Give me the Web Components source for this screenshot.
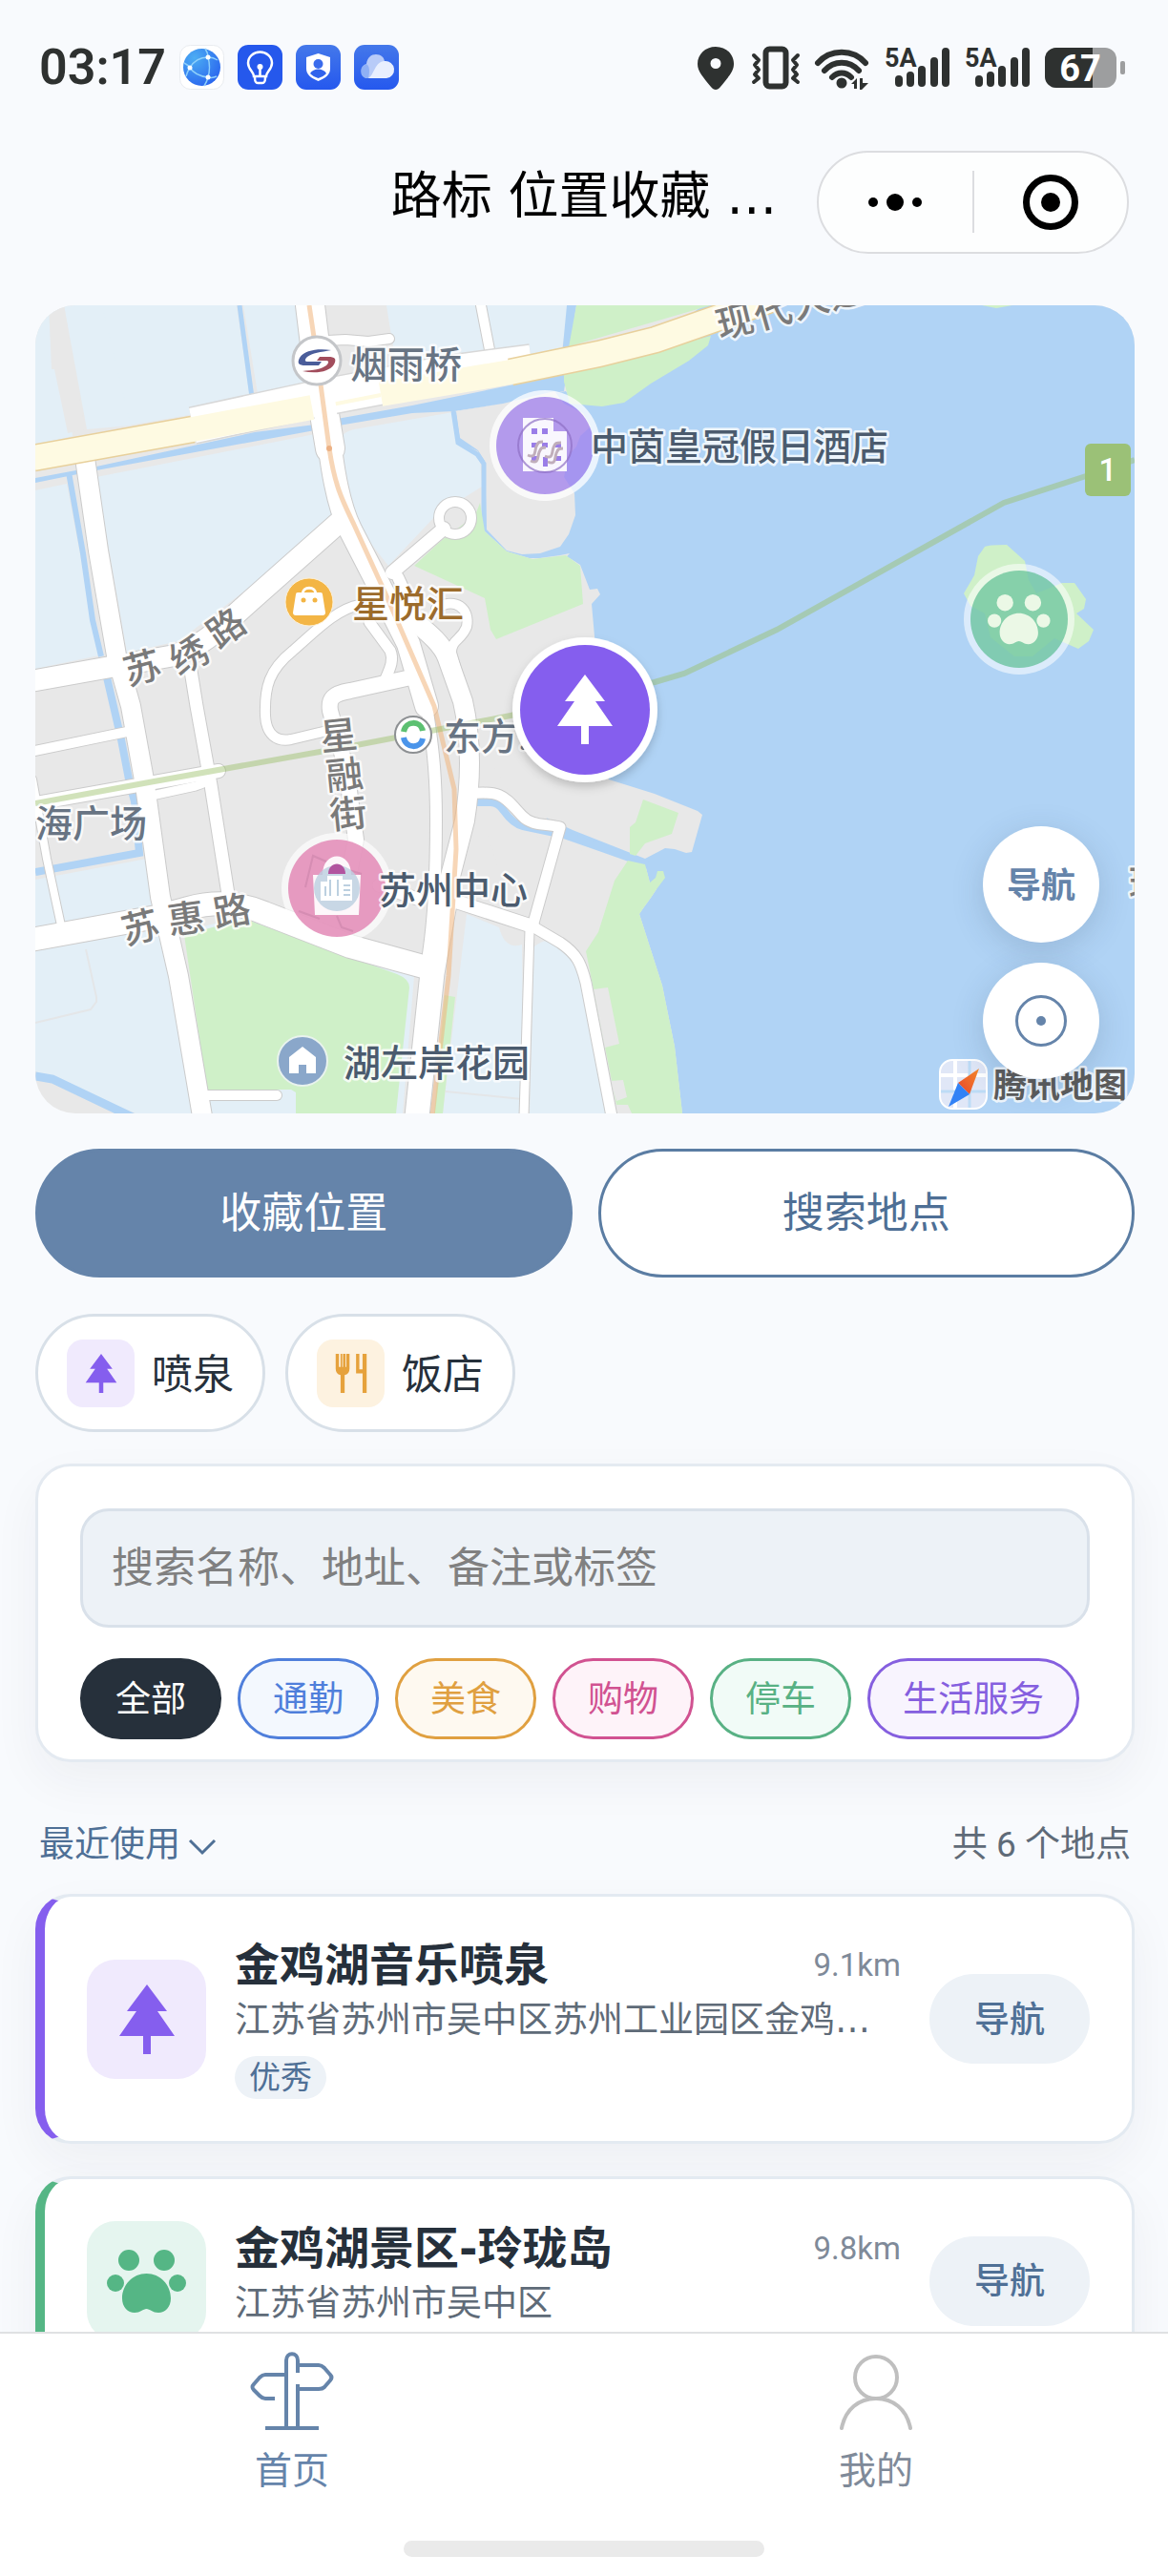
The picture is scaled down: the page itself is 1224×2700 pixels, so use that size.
<!DOCTYPE html>
<html lang="zh-CN">
<head>
<meta charset="utf-8">
<meta name="viewport" content="width=device-width, initial-scale=1">
<title>路标 位置收藏</title>
<style>
  html, body {
    margin: 0;
    height: 100%;
  }
  body {
    background: #f8fafd;
    color: #26303b;
    font-family: Roboto, "Noto Sans CJK SC", sans-serif;
  }
</style>
</head>
<body>
<app-shell>
  <status-bar slot="top" time="03:17"></status-bar>
  <nav-bar slot="top">路标 位置收藏 …</nav-bar>

  <place-map></place-map>
  <action-row>
    <action-button primary>收藏位置</action-button>
    <action-button>搜索地点</action-button>
  </action-row>
  <chip-row>
    <place-chip icon="tree" color="#855eee" tint="#f0eafd">喷泉</place-chip>
    <place-chip icon="fork" color="#e6a23c" tint="#fdf2e0">饭店</place-chip>
  </chip-row>
  <search-panel placeholder="搜索名称、地址、备注或标签">
    <filter-pill color="#ffffff" tint="#26303b" edge="#26303b" active>全部</filter-pill>
    <filter-pill color="#4f7fdb" tint="#f3f8fe">通勤</filter-pill>
    <filter-pill color="#e0a040" tint="#fef9f0">美食</filter-pill>
    <filter-pill color="#d15291" tint="#fef3f9">购物</filter-pill>
    <filter-pill color="#58b184" tint="#f1fbf7">停车</filter-pill>
    <filter-pill color="#855fdf" tint="#f8f4fe">生活服务</filter-pill>
  </search-panel>
  <list-header sort="最近使用">共 6 个地点</list-header>
  <place-card icon="tree" color="#855eee" tint="#f0eafd" distance="9.1km">
    <span slot="name">金鸡湖音乐喷泉</span>
    <span slot="address">江苏省苏州市吴中区苏州工业园区金鸡…</span>
    <place-tag slot="tags">优秀</place-tag>
  </place-card>
  <place-card icon="paw" color="#55b685" tint="#e5f5ef" distance="9.8km">
    <span slot="name">金鸡湖景区-玲珑岛</span>
    <span slot="address">江苏省苏州市吴中区</span>
  </place-card>

  <tab-bar slot="bottom">
    <tab-item icon="sign" active>首页</tab-item>
    <tab-item icon="user">我的</tab-item>
  </tab-bar>
</app-shell>

<script>
const TREE = "M29 0 50 28H40L58 54H33V73H25V54H0L18 28H8Z";
const PAW = `<circle cx="23" cy="11" r="11"/><circle cx="60" cy="11" r="11"/>
  <circle cx="9" cy="35" r="9"/><circle cx="74" cy="35" r="9"/>
  <path d="M41.5 25C56 25 67 37 67 51c0 9-6 15-13 15-6 0-9-4-12.5-4S35 66 29 66c-7 0-13-6-13-15 0-14 11-26 25.5-26z"/>`;

const ICONS = {
	tree: { w: 58, h: 73, body: `<path fill="currentColor" d="${TREE}"/>` },
	paw: { w: 83, h: 66, body: `<g fill="currentColor">${PAW}</g>` },
	fork: {
		w: 38,
		h: 48,
		body: `<path fill="currentColor" d="M0 0h4v16h2V0h2v16h1V0h3v16h1V0h4v18c0 4-2 7-6 8v22H6V26c-4-1-6-4-6-8zM25 0h4v19h4V0h5v48h-5V24h-8z"/>`,
	},
	sign: {
		w: 88,
		h: 82,
		body: `<g fill="none" stroke="currentColor" stroke-width="4">
      <path d="M38 78V9c0-9 12-9 12 0v13M50 34v44M16 80h56"/>
      <path d="M50 14h22c3 0 4 1 6 3l6 7c2 2 2 4 0 6l-6 7c-2 2-3 2-6 2H50"/>
      <path d="M38 24H16c-3 0-4 1-6 3l-6 7c-2 2-2 4 0 6l6 6c2 2 3 3 6 3h10"/></g>`,
	},
	user: {
		w: 88,
		h: 82,
		body: `<g fill="none" stroke="#bfbfbf" stroke-width="4" stroke-linecap="round">
      <circle cx="44" cy="27" r="22"/><path d="M8 80C12 60 26 49 44 49s32 11 36 31"/></g>`,
	},
};

function icon(name, width) {
	const { w, h, body } = ICONS[name];
	return `<svg width="${width || w}" viewBox="0 0 ${w} ${h}" aria-hidden="true">${body}</svg>`;
}

class BaseElement extends HTMLElement {
	constructor() {
		super();
		this.attachShadow({ mode: "open" });
	}
	connectedCallback() {
		this.shadowRoot.innerHTML = this.render();
	}
}

class AppShell extends BaseElement {
	render() {
		return `
    <style>
    :host {
      display: flex;
      flex-direction: column;
      height: 100vh;
    }
    main {
      flex: 1;
      min-height: 0;
      overflow: hidden;
      padding: 38px 35px 0 37px;
      display: flex;
      flex-direction: column;
    }
    ::slotted(*) {
      flex-shrink: 0;
    }
    </style>
    <slot name="top"></slot>
    <main><slot></slot></main>
    <slot name="bottom"></slot>
    `;
	}
}
customElements.define("app-shell", AppShell);

class StatusBar extends BaseElement {
	signal() {
		return `
    <svg width="68" height="44" viewBox="0 0 68 44">
      <text x="0" y="21" font-size="27" font-weight="700">5A</text>
      <g stroke="currentColor" stroke-width="8" stroke-linecap="round">
        <path d="M15 34v4M27 30v8M39 24v14M52 15v23M64 5v33"/>
      </g>
    </svg>`;
	}
	render() {
		return `
    <style>
    :host {
      display: flex;
      align-items: center;
      justify-content: space-between;
      height: 141px;
      padding: 0 45px 0 41px;
      color: #2e3130;
    }
    div {
      display: flex;
      align-items: center;
      gap: 14px;
    }
    .system {
      gap: 16px;
    }
    time {
      font-size: 52px;
      font-weight: 600;
      line-height: 56px;
    }
    svg {
      display: block;
      fill: currentColor;
      overflow: visible;
    }
    </style>
    <div>
      <time>${this.getAttribute("time")}</time>
      <svg width="47" height="47" viewBox="0 0 47 47">
        <defs>
          <radialGradient id="globe" cx=".3" cy=".25" r=".9"><stop offset="0" stop-color="#4cadf3"/><stop offset="1" stop-color="#2760ee"/></radialGradient>
          <linearGradient id="app" x2="0" y2="1"><stop offset="0" stop-color="#4478ea"/><stop offset="1" stop-color="#2558ee"/></linearGradient>
        </defs>
        <rect x=".5" y=".5" width="46" height="46" rx="11" fill="#fff" stroke="#e9ecf0"/>
        <circle cx="23.5" cy="23.5" r="19.5" fill="url(#globe)"/>
        <path d="M11 24C15 17 22 13 30 13M11 24c4 6 10 9 19 10M30 13c2 7 2 14 0 21M30 13c0-4-1-6-3-9M30 13c4 0 7 1 10 3M11 24c-2-3-4-4-6-5M11 24c-2 3-3 5-4 9M30 34c4 1 7 0 9-1M30 34c-1 4-2 6-4 9" fill="none" stroke="#8ed0fb" stroke-width="1.5"/>
        <g fill="#fff"><circle cx="11" cy="24" r="2.5"/><circle cx="30" cy="13" r="2.5"/><circle cx="30" cy="34" r="2.5"/></g>
      </svg>
      <svg width="47" height="47" viewBox="0 0 47 47">
        <rect width="47" height="47" rx="11" fill="#2558ec"/>
        <g fill="none" stroke="#fff" stroke-width="2.5"><path d="M17 33c0-5-6-7-6-14a12.5 11.5 0 0 1 25 0c0 7-6 9-6 14zM18 34c0 5 1 6 3 6h5c2 0 3-1 3-6M23.5 24v9"/></g>
        <circle cx="23.5" cy="23" r="3" fill="#fff"/>
      </svg>
      <svg width="47" height="47" viewBox="0 0 47 47">
        <rect width="47" height="47" rx="11" fill="url(#app)"/>
        <path fill="#fff" d="M23.5 9 36 13v12c0 6-5 10-12.5 13C16 35 11 31 11 25V13z"/>
        <circle cx="23.5" cy="20" r="5" fill="#3a6bec"/><path fill="#3163ec" d="M15 30c3-6 14-6 17 0-2 2-5 4-8.5 5-3.5-1-6.500-3-8.500-5z"/>
      </svg>
      <svg width="47" height="47" viewBox="0 0 47 47">
        <rect width="47" height="47" rx="11" fill="url(#app)"/>
        <path fill="#b8cbf8" d="M13 35a8 8 0 0 1 0-15c1-7 5-10 10-10s9 3 9 8l-14 17z"/>
        <path fill="#8fb0f5" d="M13 20c3 2 4 7 2 15h-3a8 8 0 0 1 1-15z"/>
        <path fill="#e9effe" d="M15 35c6-3 7-18 17-18a9 9 0 0 1 2 18z"/>
      </svg>
    </div>
    <div class="system">
      <svg width="41" height="46" viewBox="0 0 41 46"><path fill-rule="evenodd" d="M19 1c11 0 19 8 19 18 0 8-6 14-14 24-3 4-7 4-10 0C6 33 0 27 0 19 0 9 8 1 19 1zm0 12a5.5 5.5 0 1 0 0 11 5.5 5.5 0 0 0 0-11z"/></svg>
      <svg width="50" height="46" viewBox="0 0 50 46" stroke="currentColor">
        <rect x="14.5" y="3.5" width="21" height="39" rx="4" stroke-width="6" fill="none"/>
        <path d="M2 10l5 5-4 5 4 5-4 5 4 4-5 4M48 10l-5 5 4 5-4 5 4 5-4 4 5 4" stroke-width="4" fill="none" stroke-linecap="round" stroke-linejoin="round"/>
      </svg>
      <svg width="57" height="46" viewBox="0 0 57 46">
        <path d="M3 18C16 3 40 3 53 18M10 26c10-11 26-11 36 0M18 33c6-6 14-6 20 0" fill="none" stroke="currentColor" stroke-width="6" stroke-linecap="round"/>
        <circle cx="28" cy="39" r="5.5"/><path d="M38 40l6-6v11h-3v-5zM47 34h3v5h6l-7 7h-2z"/>
      </svg>
      ${this.signal()}
      ${this.signal()}
      <svg width="84" height="42" viewBox="0 0 84 42">
        <defs><clipPath id="cell"><rect width="75" height="42" rx="12"/></clipPath></defs>
        <g clip-path="url(#cell)"><path fill="#9d9e9f" d="M0 0h75v42H0z"/><path d="M0 0h50v42H0z"/></g>
        <rect x="79" y="14" width="5" height="14" rx="2" fill="#9d9e9f"/>
        <text x="37" y="35" font-size="38" font-weight="700" text-anchor="middle" fill="#fff">67</text>
      </svg>
    </div>
    `;
	}
}
customElements.define("status-bar", StatusBar);

class NavBar extends BaseElement {
	render() {
		return `
    <style>
    :host {
      display: grid;
      grid-template-columns: 1fr auto 1fr;
      align-items: center;
      height: 141px;
      padding: 0 41px;
    }
    h1 {
      grid-column: 2;
      margin: 0;
      padding-bottom: 12px;
      font-family: "DejaVu Sans", "Noto Sans CJK SC", sans-serif;
      font-size: 53px;
      font-weight: 400;
      line-height: 64px;
      white-space: nowrap;
      color: #000;
    }
    .capsule {
      justify-self: end;
      box-sizing: border-box;
      display: flex;
      align-items: center;
      width: 327px;
      height: 108px;
      border: 2px solid #dcdde0;
      border-radius: 54px;
      background: #fdfefe;
    }
    button {
      flex: 1;
      display: flex;
      justify-content: center;
      padding: 0;
      border: 0;
      background: none;
    }
    button + button {
      border-left: 2px solid #dcdde0;
      height: 65px;
      align-items: center;
    }
    </style>
    <h1><slot></slot></h1>
    <div class="capsule">
      <button aria-label="更多"><svg width="58" height="20" viewBox="0 0 58 20"><circle cx="6" cy="10" r="5"/><circle cx="29" cy="10" r="9"/><circle cx="52" cy="10" r="5"/></svg></button>
      <button aria-label="关闭"><svg width="58" height="58" viewBox="0 0 58 58"><circle cx="29" cy="29" r="25.5" fill="none" stroke="#000" stroke-width="7"/><circle cx="29" cy="29" r="10"/></svg></button>
    </div>
    `;
	}
}
customElements.define("nav-bar", NavBar);

class PlaceMap extends BaseElement {
	// one stroked path per road: casing first, surface on top
	roads() {
		const list = [
			[30, "M288 0 299 90 309 150"],
			[24, "M299 90 309 150C314 190 320 215 330 235L366 305 391 355 410 420"],
			[12, "M410 420C418 470 420 500 420 540 420 600 418 640 412 680"],
			[20, "M385 320C400 335 425 350 432 370L448 415C456 450 458 490 450 540L432 610"],
			[25, "M432 610 416 700 400 850"],
			[22, "M320 226 223 312C190 342 175 357 146 367L-5 394"],
			[20, "M52 160 66 257 85 367 100 420 115 503 131 620 150 703 175 850"],
			[13, "M163 383 169 420 184 503 202 617"],
			[10, "M-5 468 96 447"],
			[14, "M-5 523 192 488"],
			[9, "M122 514 168 504Q182 500 186 490"],
			[24, "M-5 665 127 641 160 632C190 624 215 626 240 637L330 672 410 694"],
			[8, "M-3 497 12 580 27 650"],
			[10, "M340 314C315 318 290 345 270 362 245 382 240 400 241 430 242 450 253 458 268 455L306 446"],
			[16, "M398 389 330 404C312 407 307 412 309 425L326 487 336 560 330 590"],
			[14, "M374 280 428 234"],
			[12, "M380 285 408 345"],
			[11, "M350 332 372 362C376 372 372 380 366 394"],
			[10, "M306 37 325 36 349 38 371 35"],
			[10, "M467 0 479 62"],
			[13, "M360 608 400 622"],
			[14, "M438 624 521 651"],
			[11, "M455 512C490 508 492 516 510 535 520 546 535 543 550 547L521 651"],
			[9, "M518 655 512 850"],
			[11, "M521 651 550 668C568 680 572 690 577 710L604 850"],
			[10, "M181 828H253"],
		];
		const draw = (extra, color) =>
			list.map(([w, d]) => `<path d="${d}" stroke="${color}" stroke-width="${w + extra}"/>`).join("");
		const ring = (w, color) =>
			`<circle cx="440" cy="223" r="17" stroke="${color}" stroke-width="${w}"/>
       <path d="M420 318C440 305 456 318 452 337 446 352 436 350 436 364L444 392" stroke="${color}" stroke-width="${w}"/>`;
		return `<g fill="none" stroke-linecap="round" stroke-linejoin="round">
      ${draw(2, "#cbcbcb")}${ring(12, "#cbcbcb")}${draw(0, "#fff")}${ring(10, "#fff")}</g>`;
	}
	roadText(chars) {
		return chars
			.map(([ch, x, y, a]) => `<text class="road" text-anchor="middle" transform="translate(${x} ${y}) rotate(${a})" y="14">${ch}</text>`)
			.join("");
	}
	render() {
		return `
    <style>
    :host {
      display: block;
      position: relative;
      aspect-ratio: 1152 / 847;
      border-radius: 42px;
      overflow: hidden;
    }
    .canvas {
      display: block;
      width: 100%;
      height: 100%;
    }
    text {
      font-size: 39px;
      font-weight: 500;
      paint-order: stroke;
      stroke: rgba(255, 255, 255, 0.8);
      stroke-width: 5px;
      stroke-linejoin: round;
      fill: #4b5b6e;
    }
    text.road {
      fill: #7a7a7a;
    }
    text.station {
      fill: #687483;
    }
    .controls {
      position: absolute;
      right: 37px;
      bottom: 36px;
      display: flex;
      flex-direction: column;
      gap: 21px;
    }
    button {
      display: flex;
      align-items: center;
      justify-content: center;
      width: 122px;
      height: 122px;
      padding: 0;
      border: 0;
      border-radius: 50%;
      background: #fff;
      color: #6584aa;
      box-shadow: 0 8px 34px rgba(38, 60, 90, 0.18);
      font: inherit;
      font-size: 36px;
      font-weight: 700;
    }
    button span {
      padding-bottom: 4px;
    }
    </style>
    <svg class="canvas" viewBox="0 0 1152 847" preserveAspectRatio="xMidYMid slice" role="img" aria-label="地图">
      <defs>
        <filter id="lift" x="-20%" y="-20%" width="140%" height="150%"><feDropShadow dx="0" dy="5" stdDeviation="5" flood-opacity=".18"/></filter>
        <linearGradient id="north" x1="1" y1="0" x2="0" y2="1"><stop offset="0" stop-color="#f58a2c"/><stop offset="1" stop-color="#e8452b"/></linearGradient>
      </defs>
      <path fill="#e8e8e8" d="M0 0h1152v847H0z"/>
      <g fill="#e3eff7">
        <path d="M0 0h24l5 57 6 48 4 32-39 10zM60 0h151l15 104-129 22-18-3zM218 0h60l9 90-53 9zM368 0h192l-9 50-11 2-160 12-6-26z"/>
        <path d="M64 180 293 135 318 225 150 352 96 364zM0 194l33-7 34 180-67 14zM322 138q0-5 12-8l104-18 5 34 23 14 2 30-48 30-50 53-30-38-15-55z"/>
        <path d="M0 602 117 580l8 53-125 20zM0 677l133-24 34 194h-62L0 803zM160 655l60-15 177 63-12 144H180zM452 638l34 14q6 24 24 18l2 177h-85zM523 672q10-8 17-5l31 23 30 157h-83z"/>
      </g>
      <path fill="#e3eff7" d="M30 0h40l30 126-46 4z"/>
      <path fill="#e8e8e8" d="M14 0h16l22 130-18 4-14-67h-3z"/>
      <path d="M53 675 64 725v5l-6 8-58 14M430 824l80 8" fill="none" stroke="#e4e6e8" stroke-width="2"/>
      <g fill="#b0d3f5">
        <path d="M700 0h452v847H678l-8-70-13-64-24-75 4-6 8-11 6-9-7-7-5-19-100-38-60-200 81-88-10 2-29 4-27-8-23-21-2-74-5-10-21-10-5-31 118-22 7 10z"/>
        <path d="M0 181 64 169 230 133 293 125 316 119 395 105 550 73 557 0h10l-13 90-64 13-51 8-44 2-77 13-25 5L64 173 0 186z"/>
      </g>
      <g fill="#e8e8e8">
        <path d="M441 111 490 103 544 90l10 13 20 10 8 14-11 10-4 11-8 9-5 23 11 17 1 23-7 20-9 13-21 7-19 1-16-4-21-22-2-72-7-11-19-13z"/>
        <path d="M420 380V265h140l11 7 10 26 8-1 3 6-9 10 3 34 15 150 48 15 45 18 5 4-11 39-6 1-12-4-10-1-21 11-76-30-60-28z"/>
        <path d="M470 540 620 586 600 650 572 680 540 660 500 640z"/>
      </g>
      <g fill="none" stroke="#b0d3f5">
        <path d="M214 0l14 104" stroke-width="5"/>
        <path d="M35 175 50 260 60 330 69 368" stroke-width="6"/>
        <path d="M75 390 90 455 99 502 104 520 109 574 0 594" stroke-width="8"/>
        <path d="M0 808 18 811 104 852" stroke-width="9"/>
        <path d="M455 521h22q8 0 14 9 10 14 20 16l43 9 40 14 48 17" stroke-width="8"/>
        <path d="M438 111l5 33 20 12 7 10v70" stroke-width="5"/>
      </g>
      <g fill="#cff0c8">
        <path d="M567 0h141L563 42l-4 2zM554 73 708 32l-3 10-20 16-40 24-28 20-23 4-34-3-6-23z"/>
        <path d="M466 207l5 30 23 21 27 8 35-4 15 11 3 40-91 37-6-10-6-33-74-34 28-26 36-27z"/>
        <path d="M156 660l63-17 160 58q13 5 13 14l-14 132H273v-22l-5-3h-88zM429 723l11 2-13 122h-9z"/>
        <path d="M621 582l18 4 5 19 6-5 2-7h6l2 7-9 12-6 9-8 11-4 6 24 75 13 64 8 70h-53l-16-9-32-161 13-20 17-54z"/>
        <path d="M637 518l37 14-7 22-28 10-10 13-6-2v-28l6-5z"/>
        <path d="M995 253q4-2 23-2l19 17 4 20 8 14 27-11h13l12 17-2 10-8 5 18 17-5 12-11 8-25-11-23 19h-19l-25-20-6-25-15-8-7-13 11-19 4-20zM992 0l15 3 17-3z"/>
      </g>
      <path fill="#e8e8e8" d="M585 717l15-2 12 59-15 4zM603 813l13-1 4 18-11 4zM609 838l12 0 4 9h-14z"/>
      ${this.roads()}
      <g fill="none">
        <path d="M165 126 299 97 430 72 520 60" stroke="#d8d8d8" stroke-width="40"/>
        <path d="M165 126 299 97 430 72 520 60" stroke="#fff" stroke-width="37"/>
        <path d="M-2 160 165 130M498 70 590 51 650 36 716 13 770-6" stroke="#e8d09c" stroke-width="29"/>
        <path d="M-2 160 165 130 290 107M362 93 498 70 590 51 650 36 716 13 770-6" stroke="#fefae2" stroke-width="26"/>
        <path d="M311 104 362 94" stroke="#fefae2" stroke-width="4"/>
        <path d="M288-5 309 150" stroke="#fff" stroke-width="24"/>
        <path d="M287 0 293 40 299 83 308 150C314 190 322 205 334 230L366 300 418 420 439 507 441 570 433 703 416 850" stroke="#f1b57c" stroke-opacity=".55" stroke-width="5"/>
        <path d="M0 522 119 500 326 463 498 430 649 395 680 386 777 340 1015 207 1101 179 1152 162" stroke="#98bf65" stroke-opacity=".45" stroke-width="6"/>
      </g>
      <circle cx="308" cy="150" r="3" fill="#ecb184"/>

      ${this.roadText([
				["苏", 112, 380, -15], ["绣", 161, 367, -28], ["路", 200, 338, -35],
				["星", 318, 451, -6], ["融", 324, 492, -6], ["街", 328, 533, -6],
				["苏", 110, 652, -14], ["惠", 158, 643, -8], ["路", 206, 635, -10],
				["现", 733, 17, -14], ["代", 773, 7, -16], ["大", 812, -4, -16], ["道", 850, -14, -16],
			])}
      <text class="station" x="330" y="76">烟雨桥</text>
      <text class="station" x="428" y="466">东方…</text>
      <text class="station" x="0" y="557">海广场</text>
      <text x="332" y="327" style="fill:#9c6b2b">星悦汇</text>
      <text x="323" y="808">湖左岸花园</text>
      <text class="road" x="1146" y="620">环</text>

      <circle cx="295" cy="58" r="25" fill="#fff" stroke="#c4c6c9" stroke-width="3"/>
      <path fill="#4a5d9a" d="M310 47c-14-2-28 0-33 8-3 6-1 8 6 8h14l3-4h-14c-4 0-4-2-1-5 5-4 14-5 25-7z"/>
      <path fill="#a24d5c" d="M280 69c14 3 28 1 33-7 3-6 1-8-6-8h-9l-3 4h9c4 0 4 2 1 5-5 4-14 5-25 6z"/>
      <circle cx="287" cy="311" r="25" fill="#f3b545" stroke="#fdf0d6" stroke-width="1"/>
      <path fill="#fff" d="M275 301h24q2 0 2 2l3 19q0 3-3 3h-28q-3 0-3-3l3-19q0-2 2-2z"/>
      <path d="M280 303c0-9 14-9 14 0" fill="none" stroke="#fff" stroke-width="3"/>
      <circle cx="281" cy="309" r="2.5" fill="#f3b545"/><circle cx="293" cy="309" r="2.5" fill="#f3b545"/>
      <circle cx="396" cy="450" r="19" fill="#fff" stroke="#8d9093" stroke-width="2"/>
      <g fill="none" stroke-width="6"><path d="M386 447c2-12 18-12 20-1" stroke="#5cc071"/><path d="M386 453c2 12 18 12 20 1" stroke="#4b95ea"/></g>
      <circle cx="280" cy="792" r="26" fill="#8aa7ca" stroke="#e9f3ee" stroke-width="2"/>
      <path fill="#fff" d="M280 777l14 11v17h-10v-9h-8v9h-10v-17z"/>
      <rect x="1100" y="145" width="48" height="55" rx="6" fill="#9bc177"/>
      <text x="1124" y="184" text-anchor="middle" style="font-size:33px;fill:#fff;stroke:none">1</text>

      <g>
        <g opacity=".75"><circle cx="534" cy="147" r="58" fill="#fff"/><circle cx="534" cy="147" r="51" fill="#8b62ea" fill-opacity=".8"/></g>
        <path fill="#fff" fill-opacity=".92" d="M511 118h32v14h14v42h-46z"/>
        <circle cx="534" cy="147" r="28" fill="none" stroke="#8e6fc4" stroke-opacity=".7" stroke-width="2"/>
        <path fill="#9a7de8" d="M520 129h6v6h-6zM531 129h6v6h-6zM520 144h6v5h-6zM531 144h6v5h-6zM545 144h6v5h-6zM520 158h6v5h-6zM545 158h6v5h-6zM532 159h5v10h-5z"/>
        <path d="M516 157c9 4 7-4 9-9s3-5 7-5M519 163c9 4 7-4 9-9s3-5 7-5M534 158c9 4 7-4 9-9s3-5 8-5M537 164c9 4 7-4 9-9s3-5 7-5" fill="none" stroke="#c0aebb" stroke-width="3"/>
      </g>
      <text x="582" y="162">中茵皇冠假日酒店</text>
      <g>
        <circle cx="316" cy="611" r="58" fill="#fff" fill-opacity=".65"/><circle cx="316" cy="611" r="51" fill="#e389b6" fill-opacity=".85"/>
        <path d="M283 610l8-33 14 6M298 643l-22-8M322 590l20 6M316 640l5 12 12 4" fill="none" stroke="#c57fa6" stroke-opacity=".5" stroke-width="2"/>
        <path fill="#fff" fill-opacity=".92" d="M291 597h10c0-26 30-26 30 0h10l-2 42h-46z"/>
        <circle cx="316" cy="611" r="24" fill="#bcd0e0" fill-opacity=".82"/>
        <path fill="#b2549f" d="M307 596c0-14 18-14 18 0z"/>
        <path fill="#fff" d="M299 604h7v-6h16v4h10v22h-33z"/>
        <path d="M304 609v10M309 602v17M317 602v17M323 608h7M323 613h7M323 618h7" stroke="#bcd0e0" stroke-width="2"/>
      </g>
      <text x="360" y="627">苏州中心</text>
      <g>
        <circle cx="1031" cy="329" r="58" fill="#fff" fill-opacity=".55"/>
        <circle cx="1031" cy="329" r="51" fill="#4cb787" fill-opacity=".63"/>
        <g transform="translate(998 303) scale(.79)" fill="#ebf8e6">${PAW}</g>
      </g>
      <g>
        <circle cx="576" cy="424" r="76" fill="#fff" filter="url(#lift)"/><circle cx="576" cy="424" r="68" fill="#855eee"/>
        <path transform="translate(547 387)" fill="#fff" d="${TREE}"/>
      </g>

      <rect x="948" y="791" width="49" height="51" rx="13" fill="#e0e7f7" stroke="#fff" stroke-width="2"/>
      <path d="M964 792v49M949 807h47" stroke="#fff" stroke-width="4"/><path d="M979 792v49M949 824h47" stroke="#bddcf6" stroke-width="3"/>
      <path fill="url(#north)" d="M989 800l-10 27-12-12z"/><path fill="#3182f6" d="M967 815l12 12-22 13z"/>
      <text x="1004" y="830" style="font-size:35px;font-weight:700;fill:#5c5c5c">腾讯地图</text>
    </svg>
    <div class="controls">
      <button><span>导航</span></button>
      <button aria-label="定位"><svg width="54" height="54" viewBox="0 0 54 54"><circle cx="27" cy="27" r="25.5" fill="none" stroke="currentColor" stroke-width="3"/><circle cx="27" cy="27" r="5" fill="currentColor"/></svg></button>
    </div>
    `;
	}
}
customElements.define("place-map", PlaceMap);

class ActionRow extends BaseElement {
	render() {
		return `
    <style>
    :host {
      display: flex;
      gap: 27px;
      margin-top: 37px;
    }
    ::slotted(*) {
      flex: 1;
    }
    </style>
    <slot></slot>
    `;
	}
}
customElements.define("action-row", ActionRow);

class ActionButton extends BaseElement {
	render() {
		return `
    <style>
    :host {
      display: block;
    }
    button {
      box-sizing: border-box;
      width: 100%;
      height: 135px;
      padding: 0 0 8px;
      border: 3px solid #5b7da3;
      border-radius: 68px;
      background: #fff;
      color: #4e6f95;
      font: inherit;
      font-size: 44px;
    }
    :host([primary]) button {
      border-color: #6584aa;
      background: #6584aa;
      color: #fff;
    }
    </style>
    <button><slot></slot></button>
    `;
	}
}
customElements.define("action-button", ActionButton);

class ChipRow extends BaseElement {
	render() {
		return `
    <style>
    :host {
      display: flex;
      gap: 21px;
      margin-top: 38px;
    }
    </style>
    <slot></slot>
    `;
	}
}
customElements.define("chip-row", ChipRow);

class PlaceChip extends BaseElement {
	render() {
		const name = this.getAttribute("icon");
		return `
    <style>
    :host {
      display: block;
    }
    button {
      box-sizing: border-box;
      display: flex;
      align-items: center;
      gap: 18px;
      height: 124px;
      padding: 0 30px;
      border: 3px solid #d8e0e8;
      border-radius: 62px;
      background: #fff;
      color: #26303b;
      font: inherit;
      font-size: 43px;
    }
    i {
      display: flex;
      align-items: center;
      justify-content: center;
      width: 71px;
      height: 71px;
      border-radius: 17px;
      background: ${this.getAttribute("tint")};
      color: ${this.getAttribute("color")};
    }
    i svg {
      height: 41px;
    }
    span {
      padding-bottom: 5px;
    }
    </style>
    <button><i>${icon(name, 38)}</i><span><slot></slot></span></button>
    `;
	}
}
customElements.define("place-chip", PlaceChip);

class SearchPanel extends BaseElement {
	render() {
		const hint = this.getAttribute("placeholder");
		return `
    <style>
    :host {
      display: block;
      margin-top: 33px;
      padding: 44px 44px 21px;
      border: 3px solid #e4eaf1;
      border-radius: 37px;
      background: #fff;
      box-shadow: 0 20px 50px rgba(38, 48, 59, 0.05);
    }
    input {
      box-sizing: border-box;
      display: block;
      width: 100%;
      height: 125px;
      padding: 0 30px;
      border: 3px solid #d9e1ea;
      border-radius: 30px;
      background: #edf2f7;
      color: #26303b;
      font: inherit;
      font-size: 44px;
    }
    input::placeholder {
      color: #808080;
      opacity: 1;
    }
    div {
      display: flex;
      gap: 17px;
      margin-top: 32px;
    }
    </style>
    <input type="search" aria-label="${hint}" placeholder="${hint}">
    <div><slot></slot></div>
    `;
	}
}
customElements.define("search-panel", SearchPanel);

class FilterPill extends BaseElement {
	render() {
		const color = this.getAttribute("color");
		return `
    <style>
    :host {
      display: block;
    }
    button {
      box-sizing: border-box;
      height: 85px;
      padding: 0 34px 5px;
      border: 3px solid ${this.getAttribute("edge") || color};
      border-radius: 43px;
      background: ${this.getAttribute("tint")};
      color: ${color};
      font: inherit;
      font-size: 37px;
      white-space: nowrap;
    }
    </style>
    <button aria-pressed="${this.hasAttribute("active")}"><slot></slot></button>
    `;
	}
}
customElements.define("filter-pill", FilterPill);

class ListHeader extends BaseElement {
	render() {
		return `
    <style>
    :host {
      display: flex;
      align-items: center;
      justify-content: space-between;
      margin-top: 60px;
      padding: 0 4px;
      font-size: 37px;
      line-height: 54px;
      color: #5f6b78;
    }
    label {
      position: relative;
      display: flex;
      align-items: center;
    }
    select {
      appearance: none;
      margin: 0;
      padding: 0 44px 0 0;
      border: 0;
      background: none;
      color: #4f7096;
      font: inherit;
    }
    svg {
      position: absolute;
      right: 6px;
      top: 20px;
      pointer-events: none;
    }
    </style>
    <label>
      <select aria-label="排序"><option>${this.getAttribute("sort")}</option></select>
      <svg width="30" height="18" viewBox="0 0 30 18" fill="none" stroke="#4f7096" stroke-width="3"><path d="M2 2l13 13L28 2"/></svg>
    </label>
    <span><slot></slot></span>
    `;
	}
}
customElements.define("list-header", ListHeader);

class PlaceCard extends BaseElement {
	render() {
		const color = this.getAttribute("color");
		return `
    <style>
    :host {
      display: flex;
      align-items: center;
      gap: 30px;
      margin-top: 24px;
      padding: 44px;
      border: 3px solid #e3eaf1;
      border-left: 10px solid ${color};
      border-radius: 37px;
      background: #fff;
      box-shadow: 0 20px 50px rgba(38, 48, 59, 0.05);
    }
    :host(:not(:first-of-type)) {
      margin-top: 34px;
    }
    i {
      display: flex;
      align-items: center;
      justify-content: center;
      width: 125px;
      height: 125px;
      border-radius: 30px;
      background: ${this.getAttribute("tint")};
      color: ${color};
    }
    .info {
      flex: 1;
      min-width: 0;
    }
    header {
      display: flex;
      align-items: center;
      justify-content: space-between;
      line-height: 56px;
    }
    h2, p {
      font-family: "DejaVu Sans", "Noto Sans CJK SC", sans-serif;
    }
    h2 {
      margin: 0;
      font-size: 47px;
      font-weight: 700;
      color: #26303b;
    }
    header span {
      font-size: 33px;
      color: #7f8a99;
    }
    p {
      margin: 6px 0 13px;
      font-size: 37px;
      line-height: 48px;
      color: #5f6b78;
      white-space: nowrap;
      overflow: hidden;
      text-overflow: ellipsis;
    }
    .tags {
      display: flex;
      gap: 12px;
    }
    button {
      height: 94px;
      padding: 0 47px 5px;
      border: 0;
      border-radius: 47px;
      background: #edf2f7;
      color: #4f7096;
      font: inherit;
      font-size: 37px;
      font-weight: 500;
    }
    </style>
    <i>${icon(this.getAttribute("icon"))}</i>
    <div class="info">
      <header><h2><slot name="name"></slot></h2><span>${this.getAttribute("distance")}</span></header>
      <p><slot name="address"></slot></p>
      <div class="tags"><slot name="tags"></slot></div>
    </div>
    <button>导航</button>
    `;
	}
}
customElements.define("place-card", PlaceCard);

class PlaceTag extends BaseElement {
	render() {
		return `
    <style>
    :host {
      display: block;
      padding: 0 15px;
      border-radius: 23px;
      background: #edf2f7;
      color: #4f7096;
      font-size: 33px;
      line-height: 45px;
    }
    </style>
    <slot></slot>
    `;
	}
}
customElements.define("place-tag", PlaceTag);

class TabBar extends BaseElement {
	render() {
		return `
    <style>
    :host {
      display: block;
      position: relative;
      padding-bottom: 20px;
      border-top: 2px solid #dfe1e3;
      background: #fff;
    }
    nav {
      display: flex;
    }
    ::slotted(*) {
      flex: 1;
    }
    .handle {
      width: 378px;
      height: 17px;
      margin: 50px auto 0;
      border-radius: 9px;
      background: #eaeaea;
    }
    </style>
    <nav><slot></slot></nav>
    <div class="handle"></div>
    `;
	}
}
customElements.define("tab-bar", TabBar);

class TabItem extends BaseElement {
	render() {
		return `
    <style>
    :host {
      display: block;
    }
    a {
      display: flex;
      flex-direction: column;
      align-items: center;
      gap: 20px;
      padding-top: 19px;
      color: #7f8a99;
      font-size: 39px;
      line-height: 46px;
      text-decoration: none;
    }
    :host([active]) a {
      color: #6584aa;
    }
    </style>
    <a href="#">${icon(this.getAttribute("icon"))}<span><slot></slot></span></a>
    `;
	}
}
customElements.define("tab-item", TabItem);
</script>
</body>
</html>
